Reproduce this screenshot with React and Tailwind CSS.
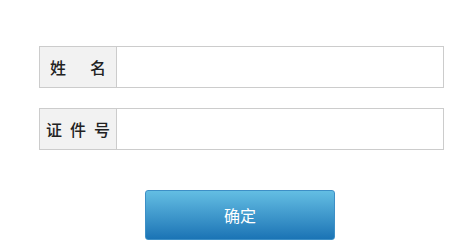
import React from 'react'

const Row = ({ children }) => (
  <div className="flex h-[42px] border border-[#cccccc]">
    <div className="flex w-[77px] items-center justify-center border-r border-[#cccccc] bg-[#f2f2f2] text-[16px] font-medium text-[#222222]">
      {children}
    </div>
    <input type="text" className="flex-1 bg-white px-2 text-sm outline-none" />
  </div>
)

const App = () => {
  return (
    <div className="h-[251px] w-[474px] bg-white pt-[46px] pl-[39px] font-['Noto_Sans_CJK_SC',sans-serif]">
      <form className="w-[405px]">
        <Row>
          <span className="flex gap-[24px]"><span>姓</span><span>名</span></span>
        </Row>
        <div className="mt-5">
          <Row>
            <span className="flex gap-[8px]"><span>证</span><span>件</span><span>号</span></span>
          </Row>
        </div>
        <button
          type="button"
          className="mt-10 ml-[106px] flex h-[50px] w-[190px] items-center justify-center rounded-[3px] border border-[#3d8fc6] bg-gradient-to-b from-[#63bee3] to-[#1a74b5] text-[16px] text-white"
        >
          确定
        </button>
      </form>
    </div>
  )
}

export default App
